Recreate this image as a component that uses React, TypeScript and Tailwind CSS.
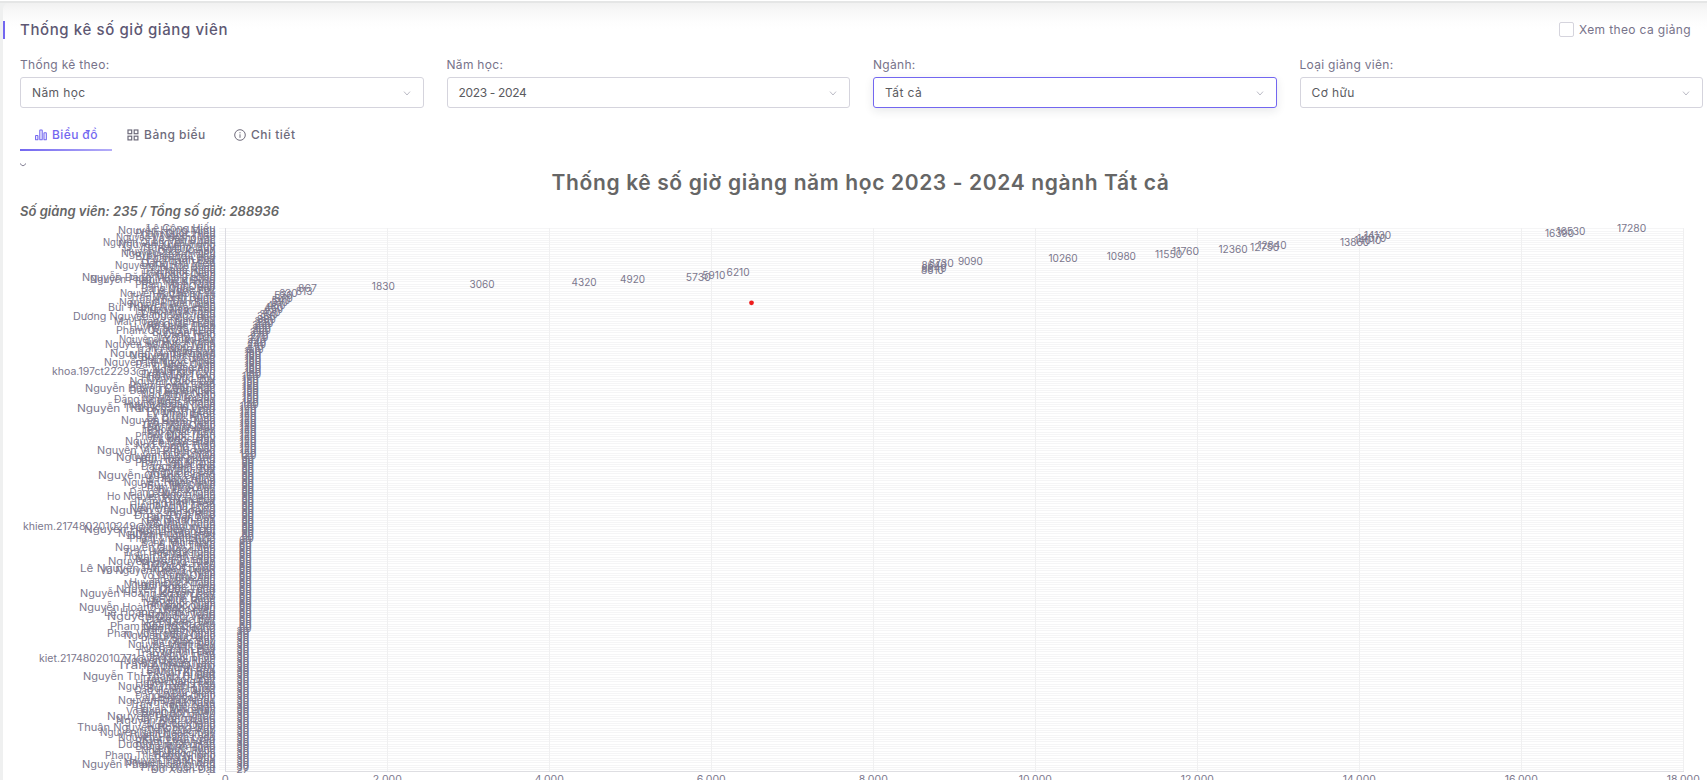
import React from 'react';

const PLOT = { left: 225.3, right: 1683.3, top: 228.3, bottom: 771.5 };
const ROWS = 235;
const PITCH = (PLOT.bottom - PLOT.top) / ROWS;
const MAX = 18000;
const OFFSET_Y = 222;

const topValues = [
  17280, 16530, 16390, 14130, 14070, 14010, 13860, 12840, 12750, 12360, 11760, 11550, 10980, 10260, 9090, 8730, 8640,
  8640, 8610, 6210, 5910, 5730, 4920, 4320, 3060, 1830, 867, 813, 630, 570, 570, 540, 510, 480, 450, 450, 420, 390, 360,
  360, 330, 330, 300, 300, 300, 270, 270, 270, 240, 240, 240, 210, 210,
];

function valueAt(row: number): number {
  if (row < topValues.length) return topValues[row];
  if (row < 64) return 180;
  if (row < 77) return 150;
  if (row < 99) return 120;
  if (row < 135) return 90;
  if (row < 174) return 60;
  if (row < 234) return 30;
  return 27;
}

const placed: Record<number, [string, number]> = {
  0: ['Lê Công Hiếu', 147],
  1: ['Nguyễn Hùng Minh', 118],
  4: ['Nguyễn Võ Hoàng Văn', 116],
  6: ['Nguyễn Quang Thùy Anh', 103],
  7: ['Nguyễn Xuân Hùng', 118],
  11: ['Nguyễn Trọng Hiếu', 121],
  16: ['Nguyễn Thị Hoa Xuân', 115],
  21: ['Nguyễn Đăng Minh Thông', 82],
  22: ['Nguyễn Phạm Hoàng Dũng', 90],
  28: ['Nguyễn Văn Hồng Vy', 120],
  32: ['Nguyễn Thanh Bình', 119],
  34: ['Bùi Trung Nghĩa Hiệp', 108],
  38: ['Dương Nguyễn Quốc Cường', 73],
  40: ['Mai Hoàng Thiên Phú', 114],
  44: ['Phạm Quốc Tấn Đạt', 116],
  48: ['Nguyễn Vũ Quốc Huy', 119],
  50: ['Nguyễn Hữu Nhật Minh', 105],
  54: ['Nguyễn Minh Khang', 110],
  58: ['Nguyễn Lê Ngọc Hưng', 104],
  62: ['khoa.197ct22293@vanlanguni.vn', 52],
  69: ['Nguyễn Huỳnh Công Hân', 85],
  74: ['Đặng Nguyễn Hoàng', 114],
  78: ['Nguyễn Trần Khánh Vinh', 77],
  83: ['Nguyễn Đăng Tuấn', 121],
  87: ['Lê Võ Quốc Minh', 142],
  88: ['Trần Nhật Nam', 142],
  92: ['Nguyễn Phúc Hân', 125],
  96: ['Nguyễn Việt Phi Hoàng', 97],
  99: ['Nguyễn Thái Hùng', 116],
  107: ['Nguyễn Quỳnh Giang', 98],
  116: ['Ho Nguyen Huy Hoang', 107],
  122: ['Nguyễn Văn Hoàng', 110],
  124: ['Đoàn Thái Bảo', 134],
  129: ['khiem.2174802010249@vanlanguni.vn', 23],
  130: ['Nguyễn Hữu Thiên Nghi', 84],
  133: ['Huỳnh Tuấn Kiệt', 127],
  138: ['Nguyễn Quốc Thiện', 115],
  144: ['Nguyễn Hoàng Tuấn', 108],
  147: ['Lê Nguyễn Phước Thành', 80],
  148: ['Võ Nguyễn Thành Trung', 100],
  156: ['Nguyễn Quốc Tuấn', 116],
  158: ['Nguyễn Hoàng Khánh Duy', 80],
  164: ['Nguyễn Hoàng Minh Quân', 79],
  166: ['Lê Hoàng Minh Hùng', 104],
  168: ['Nguyễn Quốc Vinh', 107],
  172: ['Phạm Quang Dương', 110],
  175: ['Phan Võ Trọng Nghĩa', 107],
  180: ['Nguyễn Minh Hiếu', 128],
  186: ['kiet.2174802010771@vanlanguni.vn', 39],
  189: ['Trần Anh Quân', 117],
  194: ['Nguyễn Thị Thanh Huyền', 83],
  200: ['Cao Hoàng Quốc', 134],
  204: ['Nguyễn Đặng Ngọc', 118],
  209: ['Võ Đoàn Anh Tuấn', 126],
  211: ['Nguyễn Thiên Phúc', 107],
  213: ['Nguyễn Đức Thành', 116],
  216: ['Thuận Nguyễn Hoàng Duy', 77],
  218: ['Nguyễn Nam Hoàng Duy', 100],
  221: ['Kiệt Lưu Tuấn', 142],
  223: ['Dương Thị Gia Hân', 118],
  228: ['Phạm Thị Hồng Nhung', 105],
  232: ['Nguyễn Phạm Hoàng Anh', 82],
  234: ['Đỗ Xuân Đạt', 151],
};

const family = ['Nguyễn', 'Trần', 'Lê', 'Phạm', 'Huỳnh', 'Võ', 'Đặng', 'Bùi', 'Hồ', 'Ngô', 'Lý'];
const middle = ['Minh', 'Văn', 'Quốc', 'Thị', 'Hoàng', 'Đức', 'Thanh', 'Ngọc'];
const given = ['Huy', 'Anh', 'Phúc', 'Đạt', 'Khang', 'Nam', 'Hiếu', 'Tuấn', 'Quân', 'Thảo', 'Long', 'Duy', 'Hùng'];

function labelAt(row: number): [string, number] {
  if (placed[row]) return placed[row];
  const short = row % 7 === 4;
  const text = short
    ? `${middle[(row * 3) % 8]} ${given[(row * 5) % 13]}`
    : `${family[(row * 7) % 11]} ${middle[(row * 5) % 8]} ${given[(row * 3) % 13]}`;
  return [text, 215 - text.length * 5.7];
}

const rows = Array.from({ length: ROWS }, (_, i) => i);
const ticks = Array.from({ length: 10 }, (_, i) => i * 2000);
const scale = (v: number) => PLOT.left + (v / MAX) * (PLOT.right - PLOT.left);

function Chart() {
  return (
    <svg
      className="block h-[558px] w-[1707px] font-['Inter','Liberation_Sans',sans-serif]"
      viewBox={`0 ${OFFSET_Y} 1707 558`}
      fontSize="10.5"
      fill="#7b778d"
    >
      <g shapeRendering="crispEdges" strokeWidth="1">
        {rows.map((i) => {
          const y = Math.round(PLOT.top + i * PITCH) + 0.5;
          return <path key={i} d={`M219 ${y}H1683.5`} stroke="#f5f5f6" />;
        })}
        {ticks.map((t) => {
          const x = Math.floor(scale(t)) + 0.5;
          return <path key={t} d={`M${x} 228V771`} stroke={t === 0 ? '#dcdce2' : '#f0f0f1'} />;
        })}
        <path d="M225 771.5H1684" stroke="#dedee2" />
      </g>
      <g textAnchor="end">
        {rows.map((i) => {
          const [text, left] = labelAt(i);
          return (
            <text
              key={i}
              x="215.5"
              y={PLOT.top + (i + 0.5) * PITCH + 2.6}
              fontSize="10.2"
              textLength={215.5 - left}
              lengthAdjust="spacingAndGlyphs"
            >
              {text}
            </text>
          );
        })}
        {rows.map((i) => {
          const v = valueAt(i);
          const s = String(v);
          const w = s.length * 6.25 - (s.split('1').length - 1) * 2;
          return (
            <text
              key={i}
              x={scale(v) + 21.3}
              y={PLOT.top + (i + 0.5) * PITCH + 2.9}
              fontSize="10.2"
              textLength={w}
              lengthAdjust="spacingAndGlyphs"
            >
              {s}
            </text>
          );
        })}
      </g>
      <g textAnchor="middle">
        {ticks.map((t) => (
          <text
            key={t}
            x={scale(t)}
            y="783"
            textLength={t === 0 ? 7 : t < 10000 ? 29 : 33}
            lengthAdjust="spacingAndGlyphs"
          >
            {t.toLocaleString('en-US')}
          </text>
        ))}
      </g>
      <circle cx="751.5" cy="302.8" r="2.4" fill="#ee1c1c" />
    </svg>
  );
}

function Chevron() {
  return (
    <svg className="h-2 w-2" viewBox="0 0 8 8" fill="none" stroke="#bcbcc6" strokeWidth="1">
      <path d="M1 2.6 4 6 7 2.6" />
    </svg>
  );
}

function Field({ label, value, active, numeric }: { label: string; value: string; active?: boolean; numeric?: boolean }) {
  return (
    <div className="min-w-0 flex-1">
      <div className="h-[22px] text-[12px] leading-[19px] tracking-[0.3px] text-[#77738a]">{label}</div>
      <div
        className={
          active
            ? 'flex h-[31px] items-center justify-between rounded-[3px] border border-[#7367f0] pr-3 pl-[11px] shadow-[0_3px_10px_rgba(34,41,47,0.1)]'
            : 'flex h-[31px] items-center justify-between rounded-[3px] border border-[#d5d4dd] pr-3 pl-[11px]'
        }
      >
        <span
          className={
            numeric
              ? 'text-[12px] leading-none tracking-[-0.35px] text-[#5b5b5f]'
              : 'text-[12px] leading-none tracking-[0.4px] text-[#5b5b5f]'
          }
        >
          {value}
        </span>
        <Chevron />
      </div>
    </div>
  );
}

function BarsIcon() {
  return (
    <svg className="h-3 w-3" viewBox="0 0 12 12" fill="none" stroke="currentColor" strokeWidth="1.1">
      <rect x="0.6" y="6.5" width="2.3" height="4.3" rx="0.4" />
      <rect x="4.8" y="1" width="2.4" height="9.8" rx="0.4" />
      <rect x="9" y="3.8" width="2.3" height="7" rx="0.4" />
    </svg>
  );
}

function GridIcon() {
  return (
    <svg className="h-3 w-3" viewBox="0 0 12 12" fill="none" stroke="currentColor" strokeWidth="1.2">
      <rect x="1" y="1" width="3.7" height="3.7" />
      <rect x="7.2" y="1" width="3.7" height="3.7" />
      <rect x="1" y="7.2" width="3.7" height="3.7" />
      <rect x="7.2" y="7.2" width="3.7" height="3.7" />
    </svg>
  );
}

function InfoIcon() {
  return (
    <svg className="h-3 w-3" viewBox="0 0 12 12" fill="none" stroke="currentColor" strokeWidth="1">
      <circle cx="6" cy="6" r="5.3" />
      <path d="M6 5.3V8.8M6 3.2V4.3" />
    </svg>
  );
}

export default function App() {
  return (
    <div className="h-[780px] w-[1707px] overflow-hidden bg-[#eff0f0] font-['Inter','Liberation_Sans',sans-serif]">
      <div className="h-px bg-white" />
      <div className="h-[2px] bg-[#e5e6e6]" />
      <div className="pl-[3px]">
        <main className="h-[777px] rounded-tl-[6px] bg-[linear-gradient(to_bottom,#f1f1f1_0px,#f8f8f8_8px,#fdfdfd_18px,#ffffff_26px)]">
          <header className="flex h-[52px] items-start justify-between pt-[18px] pr-[16px]">
            <div className="flex h-[18px] items-center border-l-2 border-[#7367f0] pl-[15px]">
              <h1 className="pb-[2px] text-[15px] leading-none font-medium tracking-[0.6px] text-[#5e5873]">
                Thống kê số giờ giảng viên
              </h1>
            </div>
            <label className="flex items-center gap-[5px] pt-px">
              <span className="h-[15px] w-[15px] rounded-[2px] border border-[#d5d4dd] bg-white" />
              <span className="text-[12px] leading-[15px] tracking-[0.36px] text-[#77738a]">Xem theo ca giảng</span>
            </label>
          </header>
          <section className="flex h-[53px] gap-[23px] pr-1 pl-[17px]">
            <Field label="Thống kê theo:" value="Năm học" />
            <Field label="Năm học:" value="2023 - 2024" numeric />
            <Field label="Ngành:" value="Tất cả" active />
            <Field label="Loại giảng viên:" value="Cơ hữu" />
          </section>
          <nav className="mt-[12px] ml-[17px] flex h-[31px] text-[12px] font-medium text-[#6e6b7b]">
            <div className="flex w-[92px] flex-col">
              <div className="flex h-[29px] items-center gap-[5px] pl-[15px] text-[#7367f0]">
                <BarsIcon />
                <span className="tracking-[0.4px]">Biểu đồ</span>
              </div>
              <div className="h-[2px] bg-[linear-gradient(to_right,#7367f0,#b4adf8)]" />
            </div>
            <div className="flex h-[29px] w-[107px] items-center gap-[5px] pl-[15px]">
              <GridIcon />
              <span className="tracking-[0.5px]">Bảng biểu</span>
            </div>
            <div className="flex h-[29px] items-center gap-[5px] pl-[15px]">
              <InfoIcon />
              <span className="tracking-[0.5px]">Chi tiết</span>
            </div>
          </nav>
          <div className="h-[17px] pt-[12px] pl-[17px]">
            <svg className="h-[5px] w-[6px]" viewBox="0 0 6 5" fill="none" stroke="#77738a" strokeWidth="1">
              <path d="M.5 .5C1 3.3 5 3.3 5.5 .5" />
            </svg>
          </div>
          <h2 className="flex h-[30px] items-center justify-center pl-[11px] text-[21px] font-semibold tracking-[0.63px] text-[#666666]">
            Thống kê số giờ giảng năm học 2023 - 2024 ngành Tất cả
          </h2>
          <p className="h-[24px] pt-[4px] pl-[17px] text-[13px] leading-[18px] font-semibold tracking-[0.02px] text-[#666666] italic">
            Số giảng viên: 235 / Tổng số giờ: 288936
          </p>
          <div className="-ml-[3px]">
            <Chart />
          </div>
        </main>
      </div>
    </div>
  );
}
